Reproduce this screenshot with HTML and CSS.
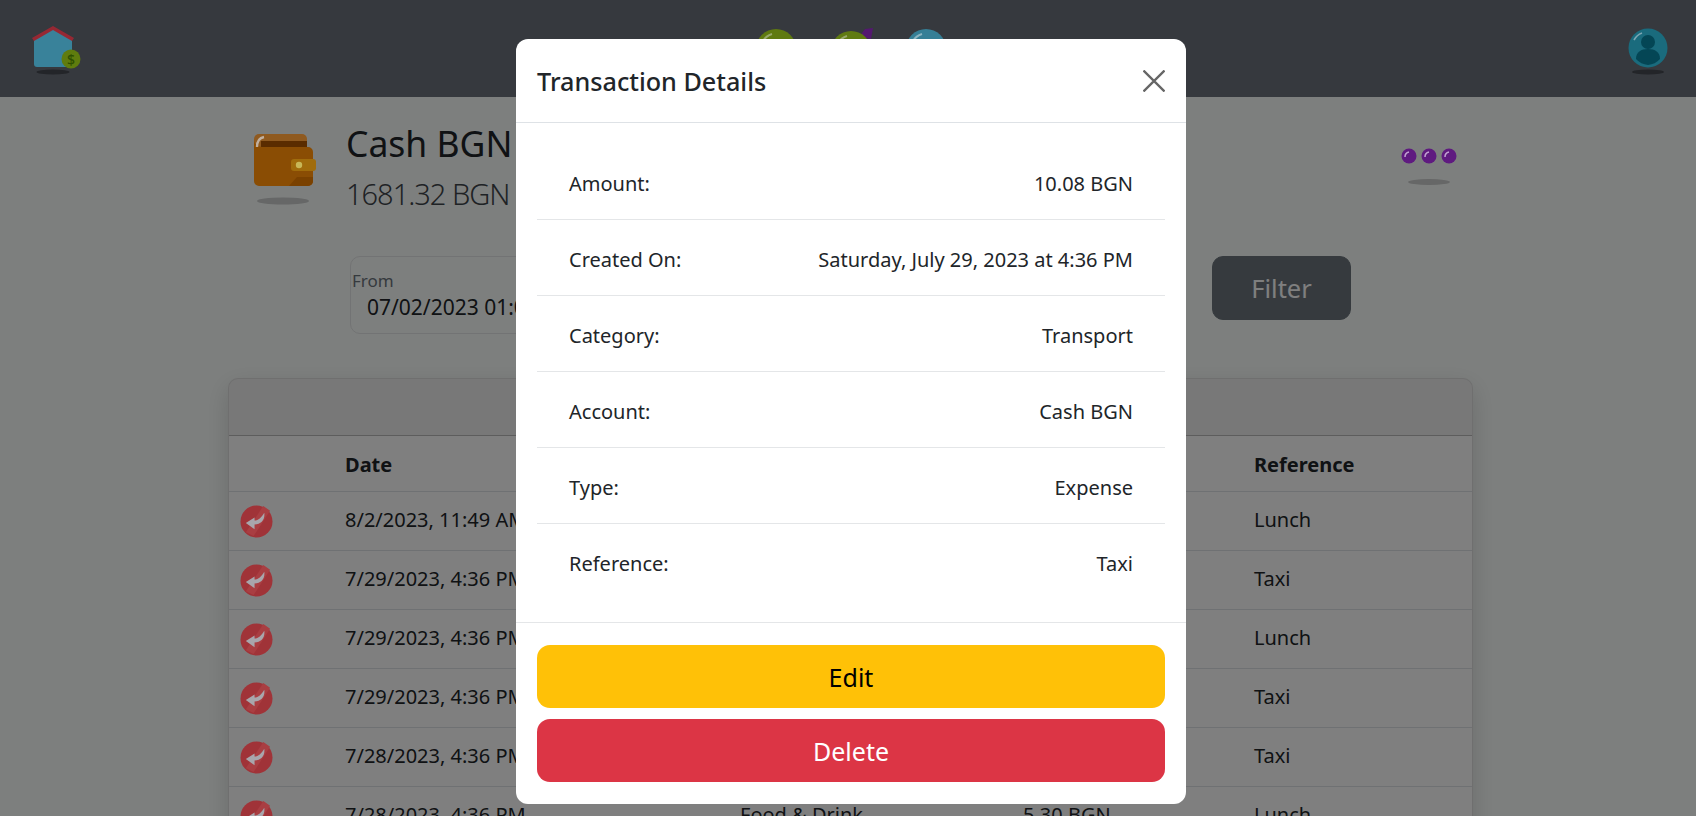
FILE: index.html
```html
<!DOCTYPE html>
<html lang="en">
<head>
<meta charset="utf-8">
<title>Transaction Details</title>
<link rel="stylesheet" href="styles.css">
</head>
<body>
<header class="nav">
  <svg class="lit nav-home" viewBox="0 0 52 50" width="52" height="50" aria-hidden="true">
    <ellipse cx="22" cy="47" rx="16.500" ry="2.600" fill="#232529"/>
    <path d="M3 14 22 3 41 14V39a3 3 0 0 1-3 3H6a3 3 0 0 1-3-3Z" fill="#39829a"/>
    <path d="M1 13 22 1 43 13 41 16 22 5 3 16Z" fill="#962833"/>
    <circle cx="40" cy="34" r="9.500" fill="#5f7c0e"/>
    <text x="40" y="39.500" class="nav-home-sign">$</text>
  </svg>
  <div class="nav-center">
    <svg class="lit" viewBox="0 0 44 44" width="44" height="44" aria-hidden="true"><circle cx="22" cy="22" r="20" fill="#5f7a10"/><path d="M9 14A16 16 0 0 1 18 7" fill="none" stroke="#98a86c" stroke-width="2"/></svg>
    <svg class="lit" viewBox="0 0 44 44" width="44" height="44" aria-hidden="true"><path d="M30 10 36 2 44 1 42 12Z" fill="#541870"/><circle cx="22" cy="24" r="20" fill="#607b11"/><path d="M9 16A16 16 0 0 1 18 9" fill="none" stroke="#98a86c" stroke-width="2"/></svg>
    <svg class="lit" viewBox="0 0 44 44" width="44" height="44" aria-hidden="true"><circle cx="22" cy="22" r="20" fill="#367f96"/><path d="M9 14A16 16 0 0 1 18 7" fill="none" stroke="#8cb4c0" stroke-width="2"/></svg>
  </div>
  <svg class="lit nav-user" viewBox="0 0 44 50" width="44" height="50" aria-hidden="true">
    <ellipse cx="22" cy="45" rx="16" ry="2.400" fill="#232529"/>
    <circle cx="22" cy="21" r="19.500" fill="#1a6b7d"/>
    <circle cx="22" cy="15" r="7" fill="#044655"/>
    <path d="M10 32C10 25 15 22 22 22S34 25 34 32A19 19 0 0 1 22 38 19 19 0 0 1 10 32Z" fill="#044655"/>
    <path d="M8 13A15 15 0 0 1 16 6" fill="none" stroke="#7ea6b2" stroke-width="1.600"/>
  </svg>
</header>

<main class="page">
  <section class="account">
    <svg class="lit wallet" viewBox="0 0 64 72" width="64" height="72" aria-hidden="true">
      <ellipse cx="30" cy="68" rx="26" ry="3.600" fill="#666767"/>
      <path d="M1 6a5 5 0 0 1 5-5H49a5 5 0 0 1 5 5V20H1Z" fill="#8f5a20"/>
      <path d="M8 8H54V16H8Z" fill="#5a2c00"/>
      <path d="M1 6V48a5 5 0 0 0 5 5H55a5 5 0 0 0 5-5V19a5 5 0 0 0-5-5H11C5 14 1 12 1 6Z" fill="#8a4d04"/>
      <path d="M36 53 44 44H60V48a5 5 0 0 1-5 5Z" fill="#7a4100"/>
      <rect x="38" y="26" width="25" height="12" rx="3" fill="#a06c0c"/>
      <circle cx="46" cy="32" r="3.200" fill="#c8b858"/>
      <path d="M4 14C4 8 6 5 11 4" fill="none" stroke="#c0b0a0" stroke-width="2.400"/>
    </svg>
    <div class="account-text">
      <h1 class="account-name">Cash BGN</h1>
      <p class="account-balance">1681.32 BGN</p>
    </div>
    <svg class="lit dots" viewBox="0 0 56 54" width="56" height="54" aria-hidden="true">
      <ellipse cx="28" cy="34" rx="21" ry="3" fill="#666767"/>
      <circle cx="8" cy="8" r="7.500" fill="#5f1a80"/><path d="M4 9A5 5 0 0 1 8 4" fill="none" stroke="#c0a0d0" stroke-width="1.500"/>
      <circle cx="28" cy="8" r="7.500" fill="#5f1a80"/><path d="M24 9A5 5 0 0 1 28 4" fill="none" stroke="#c0a0d0" stroke-width="1.500"/>
      <circle cx="48" cy="8" r="7.500" fill="#5f1a80"/><path d="M44 9A5 5 0 0 1 48 4" fill="none" stroke="#c0a0d0" stroke-width="1.500"/>
    </svg>
  </section>

  <form class="filter">
    <div class="field"><span class="field-label">From</span><span class="field-value">07/02/2023 01:00 AM</span></div>
    <div class="field"></div>
    <button type="button" class="filter-btn">Filter</button>
  </form>

  <section class="card">
    <div class="card-head"></div>
    <table class="tx">
      <colgroup><col class="c-icon"><col class="c-date"><col class="c-cat"><col class="c-amt"><col class="c-ref"></colgroup>
      <thead><tr><th></th><th>Date</th><th></th><th></th><th>Reference</th></tr></thead>
      <tbody>
        <tr><td><svg class="lit tx-icon" viewBox="0 0 34 34" aria-hidden="true"><use href="#exp"/></svg></td><td>8/2/2023, 11:49 AM</td><td></td><td></td><td>Lunch</td></tr>
        <tr><td><svg class="lit tx-icon" viewBox="0 0 34 34" aria-hidden="true"><use href="#exp"/></svg></td><td>7/29/2023, 4:36 PM</td><td></td><td></td><td>Taxi</td></tr>
        <tr><td><svg class="lit tx-icon" viewBox="0 0 34 34" aria-hidden="true"><use href="#exp"/></svg></td><td>7/29/2023, 4:36 PM</td><td></td><td></td><td>Lunch</td></tr>
        <tr><td><svg class="lit tx-icon" viewBox="0 0 34 34" aria-hidden="true"><use href="#exp"/></svg></td><td>7/29/2023, 4:36 PM</td><td></td><td></td><td>Taxi</td></tr>
        <tr><td><svg class="lit tx-icon" viewBox="0 0 34 34" aria-hidden="true"><use href="#exp"/></svg></td><td>7/28/2023, 4:36 PM</td><td></td><td></td><td>Taxi</td></tr>
        <tr><td><svg class="lit tx-icon" viewBox="0 0 34 34" aria-hidden="true"><use href="#exp"/></svg></td><td>7/28/2023, 4:36 PM</td><td>Food &amp; Drink</td><td>5.30 BGN</td><td>Lunch</td></tr>
      </tbody>
    </table>
  </section>
</main>

<svg class="sprite" aria-hidden="true"><defs>
  <g id="exp">
    <circle cx="17" cy="17" r="16.500" fill="#a03338"/>
    <path d="M24 1 31 6 14 32 6 28Z" fill="#a93e42"/>
    <path d="M25 8C26 15 22 20 15 20V25L6 18.500 15 13V16C19 16 22 13 25 8Z" fill="#a8a6ac"/>
  </g>
</defs></svg>

<div class="backdrop"></div>
<div class="dialog" role="dialog" aria-modal="true">
  <div class="dialog-head">
    <h2 class="dialog-title">Transaction Details</h2>
    <button type="button" class="close" aria-label="Close">
      <svg viewBox="0 0 22 22" width="22" height="22" aria-hidden="true"><path d="M.5 .5 21.500 21.500M21.500 .5 .5 21.500" stroke="#666" stroke-width="2.300" fill="none"/></svg>
    </button>
  </div>
  <div class="dialog-body">
    <div class="detail"><span>Amount:</span><span>10.08 BGN</span></div>
    <div class="detail"><span>Created On:</span><span>Saturday, July 29, 2023 at 4:36 PM</span></div>
    <div class="detail"><span>Category:</span><span>Transport</span></div>
    <div class="detail"><span>Account:</span><span>Cash BGN</span></div>
    <div class="detail"><span>Type:</span><span>Expense</span></div>
    <div class="detail"><span>Reference:</span><span>Taxi</span></div>
  </div>
  <div class="dialog-foot">
    <button type="button" class="action action-edit">Edit</button>
    <button type="button" class="action action-delete">Delete</button>
  </div>
</div>
</body>
</html>
```
FILE: styles.css
```css
* { box-sizing: border-box; }
html, body { height: 816px; overflow: hidden; }
body {
  margin: 0;
  background: #fbfffd;
  color: #212529;
  font-family: "Noto Sans", "Open Sans", sans-serif;
  font-size: 20px;
  position: relative;
}
.sprite { width: 0; height: 0; position: absolute; }

/* Icons keep their full colour above the backdrop, under the dialog. */
.lit { position: relative; z-index: 1; }

.nav {
  height: 97px;
  background: #6c727d;
  display: flex;
  align-items: flex-start;
  padding: 25px 26px 0 31px;
  position: relative;
}
.nav-home-sign { font-size: 14px; font-weight: 500; fill: #2e5000; text-anchor: middle; font-family: "Noto Sans", sans-serif; }
.nav-center {
  position: absolute;
  left: 754px;
  top: 27px;
  display: flex;
  gap: 31px;
}
.nav-user { margin-left: auto; margin-top: 2px; }

.page { margin: 0 223px 0 228px; padding-top: 23px; }

.account { display: flex; align-items: flex-start; height: 112px; }
.wallet { margin: 13px 0 0 25px; flex: none; }
.account-text { margin-left: 29px; }
.account-name { margin: -2px 0 0; font-size: 35.500px; font-weight: 400; line-height: 50px; }
.account-balance { margin: 3px 0 0; font-size: 29px; font-weight: 300; line-height: 46px; letter-spacing: -1px; color: #3f454b; }
.dots { margin: 28px 16px 0 auto; flex: none; }

.filter {
  margin-top: 24px;
  padding: 0 122px;
  display: flex;
  align-items: flex-start;
  gap: 16px;
}
.field {
  width: 400px;
  height: 78px;
  border: 1px solid #e4e6e8;
  border-radius: 10px;
  display: flex;
  flex-direction: column;
  padding-top: 13px;
}
.field-label { font-size: 17px; line-height: 22px; color: #6c757d; padding-left: 1px; }
.field-value { font-size: 21px; line-height: 30px; padding-left: 16px; white-space: nowrap; }
.filter-btn {
  margin-left: auto;
  width: 139px;
  height: 64px;
  background: #6c757d;
  border: 1px solid #6c757d;
  border-radius: 11px;
  color: #fff;
  font: 400 25.500px "Noto Sans", sans-serif;
}

.card {
  margin-top: 44px;
  border: 1px solid rgba(0, 0, 0, .13);
  border-radius: 10px;
  box-shadow: 0 8px 24px rgba(0, 0, 0, .15);
  overflow: hidden;
  background: #fff;
}
.card-head { height: 57px; background: rgba(0, 0, 0, .06); border-bottom: 1px solid rgba(0, 0, 0, .22); }
.tx { width: 100%; border-collapse: collapse; table-layout: fixed; }
.c-icon { width: 105px; }
.c-date { width: 395px; }
.c-cat { width: 283px; }
.c-amt { width: 231px; }
.tx th, .tx td {
  padding: 0 11px;
  text-align: left;
  border-bottom: 1px solid #dee2e6;
  white-space: nowrap;
  font-size: 20px;
}
.tx th { height: 55px; font-weight: 700; padding-top: 2px; }
.tx td { height: 59px; padding-bottom: 2px; }
.tx td:first-child { padding: 0 0 0 11px; }
.tx-icon { width: 33px; height: 33px; display: block; margin-top: 2px; }

.backdrop { position: absolute; inset: 0; background: rgba(0, 0, 0, .5); }
.dialog {
  position: absolute;
  z-index: 2;
  left: 516px;
  top: 39px;
  width: 670px;
  height: 765px;
  background: #fff;
  border-radius: 12px;
  display: flex;
  flex-direction: column;
}
.dialog-head {
  height: 84px;
  flex: none;
  display: flex;
  align-items: center;
  justify-content: space-between;
  padding: 0 21px;
  border-bottom: 1px solid #dee2e6;
}
.dialog-title { margin: 0; font-size: 25.200px; font-weight: 500; }
.close { background: none; border: 0; padding: 0; display: flex; }
.dialog-body { height: 499px; flex: none; padding: 21px 21px 22px; }
.detail {
  height: 76px;
  padding: 3px 32px 0;
  display: flex;
  align-items: center;
  justify-content: space-between;
  border-bottom: 1px solid #e4e6e8;
}
.detail:last-child { border-bottom: 0; }
.dialog-foot {
  flex: none;
  border-top: 1px solid #e4e6e8;
  padding: 22px 21px;
  display: flex;
  flex-direction: column;
  gap: 11px;
}
.action {
  height: 63px;
  border: 0;
  border-radius: 13px;
  font: 400 25px "Noto Sans", sans-serif;
}
.action-edit { background: #ffc107; color: #000; }
.action-delete { background: #dc3545; color: #fff; }
```
